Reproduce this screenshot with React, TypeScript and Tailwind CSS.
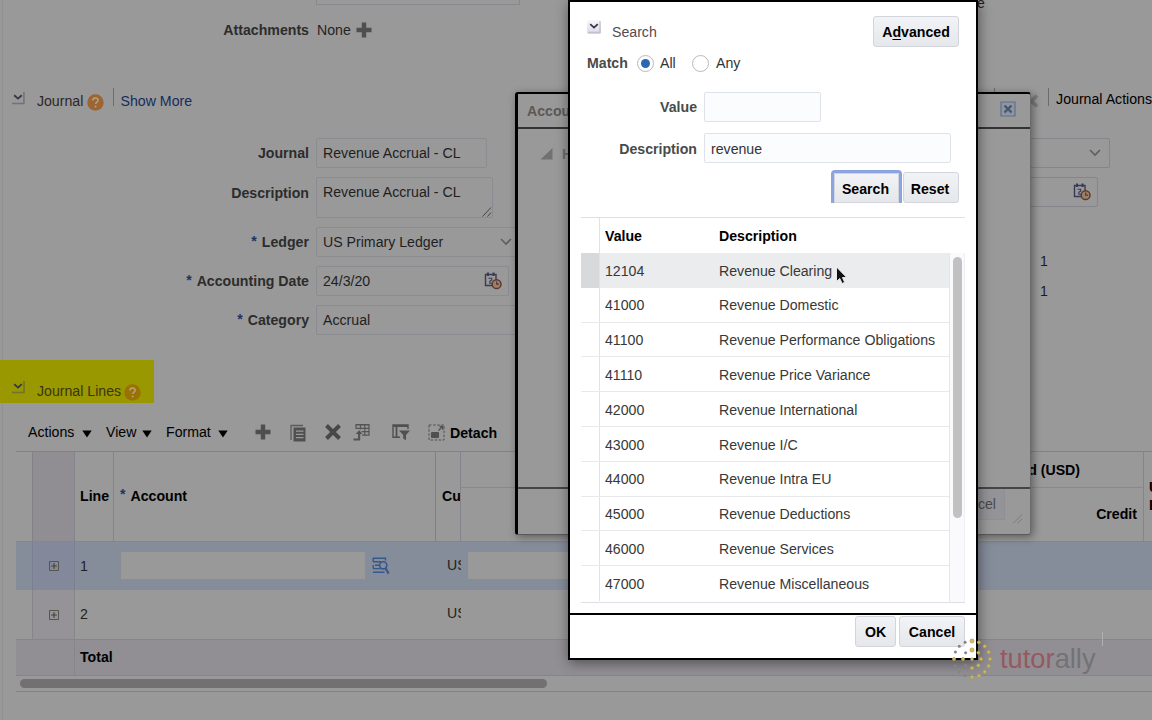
import React from 'react';
import clsx from 'clsx';

interface AccountValue {
  value: string;
  description: string;
}

const accountValues: AccountValue[] = [
  { value: '12104', description: 'Revenue Clearing' },
  { value: '41000', description: 'Revenue Domestic' },
  { value: '41100', description: 'Revenue Performance Obligations' },
  { value: '41110', description: 'Revenue Price Variance' },
  { value: '42000', description: 'Revenue International' },
  { value: '43000', description: 'Revenue I/C' },
  { value: '44000', description: 'Revenue Intra EU' },
  { value: '45000', description: 'Revenue Deductions' },
  { value: '46000', description: 'Revenue Services' },
  { value: '47000', description: 'Revenue Miscellaneous' },
];

const DiscloseIcon = ({ className }: { className?: string }) => (
  <svg width="14" height="14" viewBox="0 0 14 14" fill="none" className={className}>
    <path d="M1 12.5h12V1" stroke="currentColor" strokeWidth="1.6" opacity="0.45" />
    <path d="M3.2 4.2L7 7.6l3.8-3.4" stroke="#35354a" strokeWidth="1.8" />
  </svg>
);

const HelpIcon = ({ className }: { className: string }) => (
  <svg width="17" height="17" viewBox="0 0 17 17" className={className}>
    <circle cx="8.5" cy="8.5" r="8.3" fill="currentColor" />
    <path
      d="M5.9 6.6c0-3.4 5.3-3.2 5.3-.3 0 1.9-2.5 1.9-2.5 3.8"
      fill="none"
      stroke="#bd9f7c"
      strokeWidth="1.5"
    />
    <circle cx="8.6" cy="12.6" r="1" fill="#bd9f7c" />
  </svg>
);

const PlusIcon = ({ className }: { className?: string }) => (
  <svg width="16" height="16" viewBox="0 0 16 16" className={className}>
    <path d="M5.8 0.5h4.4v5.3h5.3v4.4h-5.3v5.3H5.8v-5.3H0.5V5.8h5.3z" fill="#4f4f4f" />
  </svg>
);

const CalendarIcon = () => (
  <svg width="18" height="18" viewBox="0 0 18 18" fill="none">
    <path d="M1.5 2.5h10.5v11H1.5z" stroke="#3a3a56" strokeWidth="1.4" />
    <path d="M4 0.5v3.5M9.5 0.5v3.5" stroke="#3a3a56" strokeWidth="2" />
    <path d="M4.5 6.3h3.2v1.8L5.8 9.2v2h2.4" stroke="#3a3a56" strokeWidth="1.1" />
    <circle cx="12.6" cy="12.2" r="4.4" fill="#9b8068" stroke="#5c3a30" strokeWidth="1.5" />
    <path d="M12.6 9.4v2.8h2.4" stroke="#5c3a30" strokeWidth="1.2" />
  </svg>
);

const ChevronIcon = () => (
  <svg width="12" height="8" viewBox="0 0 12 8" fill="none">
    <path d="M1 1l5 5 5-5" stroke="#5e5e62" strokeWidth="1.6" />
  </svg>
);

const ExpandIcon = () => (
  <svg width="10" height="10" viewBox="0 0 10 10" fill="none">
    <path d="M0.5 0.5h9v9h-9z" stroke="#55554c" />
    <path d="M5 2.2v5.6M2.2 5h5.6" stroke="#44443c" strokeWidth="1.2" />
  </svg>
);

const AccountPickerIcon = () => (
  <svg width="18" height="18" viewBox="0 0 18 18" fill="none" stroke="#37588a">
    <path d="M13.5 3.4V1.2H1M1 15.2h11.5M1.2 1v4M1.2 8v3.6" strokeWidth="1.4" />
    <path d="M1 4.8h8M3 8.2h4M1 11.6h7.5" strokeWidth="1.4" />
    <circle cx="11.2" cy="8.3" r="3.6" strokeWidth="1.6" />
    <path d="M13.4 11l3.2 5.6" strokeWidth="2.2" />
  </svg>
);

const Cell = ({ children, className }: { children?: React.ReactNode; className?: string }) => (
  <div className={clsx('flex shrink-0 items-center', className)}>{children}</div>
);

interface FieldProps {
  label: string;
  required?: boolean;
  className: string;
  labelClass?: string;
  children: React.ReactNode;
}

const Field = ({ label, required, className, labelClass, children }: FieldProps) => (
  <div className="flex gap-[7px]">
    <div className={clsx('flex h-[30px] w-[309px] items-center justify-end font-bold text-[#2c2c2c]', labelClass)}>
      {required && <span className="mr-[5px] -mt-[3px] text-[#1c3462]">*</span>}
      {label}
    </div>
    <div className={clsx('flex rounded-[2px] border border-[#8b8b92] px-1.5 text-[#1f1f1f]', className)}>
      {children}
    </div>
  </div>
);

const Menu = ({ label, className }: { label: string; className: string }) => (
  <div className={clsx('flex items-center justify-between text-black', className)}>
    {label}
    <svg width="10" height="8" viewBox="0 0 10 8" className="mt-[3px]">
      <path d="M0.3 0.5h9.4L5 7.5z" fill="#000" />
    </svg>
  </div>
);

const Toolbar = () => (
  <div className="flex h-[48px] items-center pl-7 pt-[10px]">
    <Menu label="Actions" className="w-[64px]" />
    <Menu label="View" className="ml-[14px] w-[46px]" />
    <Menu label="Format" className="ml-[14px] w-[62px]" />
    <PlusIcon className="ml-[27px]" />
    <svg width="16" height="18" viewBox="0 0 16 18" className="ml-[19px] mt-px">
      <path d="M1 16V1.5h12" fill="none" stroke="#5c5c5c" strokeWidth="1.3" />
      <path d="M3.5 3.5h12v14h-12z" fill="#505050" />
      <path d="M6 7.2h7.5M6 10.4h7.5M6 13.6h7.5" stroke="#999" strokeWidth="1.3" />
    </svg>
    <svg width="16" height="16" viewBox="0 0 16 16" className="ml-[19px]">
      <path d="M1.5 1.5l13 13M14.5 1.5l-13 13" stroke="#484848" strokeWidth="4" />
    </svg>
    <svg width="17" height="18" viewBox="0 0 17 18" fill="none" stroke="#555" className="ml-[12px]">
      <path d="M3 6V1.5h13v10.7H9" strokeWidth="1.2" />
      <path d="M3 2h13M3 5.3h13M8.5 8.7h7.5M7.5 1.5v5M11.8 1.5v10.7" strokeWidth="1.2" />
      <path d="M0.5 16.5h5.6V9.5" strokeWidth="2.2" />
      <path d="M2.8 11L6.1 7.3 9.4 11z" fill="#505050" stroke="none" />
    </svg>
    <svg width="18" height="17" viewBox="0 0 18 17" fill="none" stroke="#505050" className="ml-[22px]">
      <path d="M8 13.3H1V1h15v4" strokeWidth="1.4" />
      <path d="M1 2h15M4.5 1v12" strokeWidth="1.8" />
      <path d="M7 6.5h11l-4 4.4v5.3l-2.8-1.8v-3.5z" fill="#505050" stroke="none" />
    </svg>
    <svg width="17" height="17" viewBox="0 0 17 17" fill="none" stroke="#505050" className="ml-[18px]">
      <path d="M1 1h15v15H1z" strokeDasharray="2.5 1.6" />
      <path d="M3.5 8.5h7v5h-7z" fill="#505050" />
      <path d="M10.5 6.5l4-4M11.5 2.5h3.2v3.2" strokeWidth="1.3" />
    </svg>
    <span className="ml-[5px] mt-[2px] font-bold text-black">Detach</span>
  </div>
);

const LinesTable = () => (
  <div className="ml-4 w-[1136px] overflow-hidden border-t border-[#818188]">
    <div className="flex h-[89px] font-bold text-black">
      <Cell className="w-[17px] border-r border-[#818188]" />
      <Cell className="w-[42px] border-r border-[#84848c] bg-[#918e93]" />
      <Cell className="w-[39px] border-r border-[#84848c] pl-[5px] pb-[2px]">Line</Cell>
      <Cell className="w-[322px] border-r border-[#7f8188] pl-[6px] pb-[2px]">
        <span className="-mt-[3px] mr-[5px] text-[#1c3462]">*</span>Account
      </Cell>
      <Cell className="w-[25px] overflow-hidden border-r border-[#84848c] pl-[6px] pb-[2px]">Cu</Cell>
      <div className="flex w-[683px] shrink-0 flex-col border-r border-[#84848c]">
        <div className="flex h-[36px] items-center justify-end border-b border-[#888890] pr-[63px]">
          Accounted (USD)
        </div>
        <div className="flex flex-1 items-center justify-end pr-[6px] pb-px">Credit</div>
      </div>
      <Cell className="w-[60px] pl-[5px] pb-[2px] leading-[18px]">
        Units
        <br />
        Entered
      </Cell>
    </div>
    <div className="flex h-[49px] items-center border-t border-[#7c8798] bg-[#858c9a] text-[#222]">
      <Cell className="h-full w-[17px] border-r border-[#7a808f]" />
      <Cell className="h-full w-[42px] justify-center border-r border-[#7a808f] bg-[#83889a]">
        <ExpandIcon />
      </Cell>
      <Cell className="w-[45px] pl-[5px]">1</Cell>
      <div className="h-[29px] w-[246px] border border-[#898c95] bg-[#999] -mt-px" />
      <Cell className="w-[69px] pl-[6px]">
        <AccountPickerIcon />
      </Cell>
      <Cell className="w-[26px] overflow-hidden pl-[12px] pb-[2px]">USD</Cell>
      <div className="-mt-px ml-[6px] h-[29px] w-[160px] border border-[#898c95] bg-[#999]" />
    </div>
    <div className="flex h-[49px] items-center text-[#222]">
      <Cell className="h-full w-[17px] border-r border-[#85858c]" />
      <Cell className="h-full w-[42px] justify-center border-r border-[#85858c] bg-[#959398]">
        <ExpandIcon />
      </Cell>
      <Cell className="w-[360px] pl-[5px] pb-[2px]">2</Cell>
      <Cell className="w-[26px] overflow-hidden pl-[12px] pb-[3px]">USD</Cell>
    </div>
    <div className="flex h-[37px] items-center border-y border-[#85858b] bg-[#918f94] font-bold text-black">
      <Cell className="h-full w-[59px] border-r border-[#85858c]" />
      <Cell className="pl-[5px] pb-[2px]">Total</Cell>
    </div>
    <div className="flex h-[16px] items-center border-b border-[#838387] pl-1">
      <div className="h-[9px] w-[527px] rounded-full bg-[#727070]" />
    </div>
  </div>
);

const JournalPage = () => (
  <div className="relative flex flex-col">
    <div className="flex h-[5px]">
      <div className="ml-[316px] w-[204px] border border-t-0 border-[#88888f]" />
      <span className="ml-[457px] -mt-[5px] leading-[16px] text-[#1c1c1c]">e</span>
    </div>
    <div className="flex h-[49px] items-center">
      <span className="w-[309px] pt-px text-right font-bold text-[#2c2c2c]">Attachments</span>
      <span className="ml-[8px] mr-[5px] text-[#242424]">None</span>
      <PlusIcon />
    </div>
    <div className="mt-[32px] flex h-[30px] items-center">
      <DiscloseIcon className="-mt-[7px] ml-[11px] text-[#44445c]" />
      <span className="ml-[12px] w-[50px] text-[#2e2628]">Journal</span>
      <HelpIcon className="mt-[2px] text-[#9b6534]" />
      <div className="-mt-[9px] ml-[9px] h-[18px] w-px bg-[#6c6c6c]" />
      <span className="ml-[7px] w-[72px] text-[#162c5c]">Show More</span>
      <div className="-mt-[9px] ml-[802px] h-[18px] w-px bg-[#6c6c6c]" />
      <svg width="12" height="16" viewBox="0 0 12 16" className="ml-[31px]">
        <path d="M0 2.5l11 11M11 2.5l-11 11" stroke="#7b7b7b" strokeWidth="3.6" />
      </svg>
      <div className="-mt-[9px] ml-[10px] h-[18px] w-px shrink-0 bg-[#6c6c6c]" />
      <span className="-mt-[4px] ml-[7px] shrink-0 text-black">Journal Actions</span>
    </div>
    <div className="mt-[22px] flex h-[222px]">
      <div className="flex w-[570px] flex-col">
        <Field label="Journal" className="h-[30px] w-[171px] items-center">
          Revenue Accrual - CL
        </Field>
        <div className="h-[9px]" />
        <Field label="Description" labelClass="pt-[2px]" className="h-[41px] w-[177px] justify-between pt-[5px] pr-0 leading-[18px]">
          Revenue Accrual - CL
          <svg width="10" height="10" viewBox="0 0 10 10" className="self-end">
            <path d="M0.5 9.5l8.5-9M5.5 9.5l3.5-4" stroke="#444" />
          </svg>
        </Field>
        <div className="h-[9px]" />
        <Field label="Ledger" required className="h-[30px] w-[205px] items-center justify-between pr-[8px] pb-px">
          US Primary Ledger
          <ChevronIcon />
        </Field>
        <div className="h-[9px]" />
        <Field label="Accounting Date" required className="h-[30px] w-[193px] items-center justify-between">
          24/3/20
          <CalendarIcon />
        </Field>
        <div className="h-[9px]" />
        <Field label="Category" required className="h-[30px] w-[205px] items-center">
          Accrual
        </Field>
      </div>
      <div className="flex flex-1 flex-col pl-[400px] text-[#1c1c1c]">
        <div className="flex h-[30px] w-[140px] items-center justify-end rounded-[2px] border border-[#85858b] pr-[8px]">
          <ChevronIcon />
        </div>
        <div className="mt-[9px] flex h-[30px] w-[128px] items-center justify-end rounded-[2px] border border-[#85858b] pr-[6px]">
          <CalendarIcon />
        </div>
        <span className="mt-[39px] pl-[70px] leading-[30px]">1</span>
        <span className="pl-[70px] leading-[31px]">1</span>
      </div>
    </div>
    <div className="flex h-[43px] w-[154px] items-end bg-[#9a9800] pb-[2px]">
      <DiscloseIcon className="mb-[7px] ml-[11px] text-[#44445c]" />
      <span className="ml-[12px] w-[87px] leading-[20px] text-[#3c3410]">Journal Lines</span>
      <HelpIcon className="text-[#9a7204]" />
    </div>
    <Toolbar />
    <LinesTable />
  </div>
);

// Account combination dialog, sits behind the value picker
const AccountDialog = () => (
  <div className="absolute left-[515px] top-[92px] flex h-[443px] w-[516px] flex-col rounded-[3px] border-l-[3px] border-t-[2px] border-r border-b border-t-black border-l-black border-r-[#6b6b6b] border-b-[#5a5a5a] bg-[#999] shadow-[2px_2px_9px_rgba(0,0,0,0.4)]">
    <div className="flex h-[35px] items-center justify-between border-b-2 border-[#333] pl-[9px] pr-[14px]">
      <span className="font-bold text-[#5c5858]">Account</span>
      <svg width="16" height="16" viewBox="0 0 16 16" fill="none" className="-mt-[4px]">
        <path d="M1 1h14v14H1z" fill="#8d95a2" stroke="#5f7089" strokeWidth="1.2" />
        <path d="M4.5 4.5l7 7M11.5 4.5l-7 7" stroke="#46566f" strokeWidth="2.4" />
      </svg>
    </div>
    <div className="flex flex-1 items-start pl-[22px] pt-[16px]">
      <svg width="13" height="12" viewBox="0 0 13 12" className="mt-[3px]">
        <path d="M12.5 0v11.5H0.5z" fill="#717171" />
      </svg>
      <span className="ml-[9px] font-bold text-[#6b6b6b]">Hide</span>
    </div>
    <div className="flex h-[47px] justify-end border-t-2 border-[#444] pr-[7px]">
      <div className="flex h-[31px] w-[70px] items-center justify-end border-r border-b border-[#8e8e94] bg-[#949498] pr-[8px] text-[#4a4a4a]">
        Cancel
      </div>
      <svg width="10" height="10" viewBox="0 0 10 10" className="ml-[8px] mt-[25px]">
        <path d="M0 9.5l9-9M4.5 9.5l4.5-4.5" stroke="#7c7c7c" />
      </svg>
    </div>
  </div>
);

const Button = ({ children, className }: { children: React.ReactNode; className: string }) => (
  <div
    className={clsx(
      'flex items-center justify-center rounded-[3px] border border-[#d3d5dc] bg-linear-to-b from-[#f2f3f6] to-[#e6e7eb] font-bold text-black',
      className,
    )}
  >
    <span>{children}</span>
  </div>
);

const Radio = ({ checked }: { checked?: boolean }) => (
  <div className="flex h-[17px] w-[17px] items-center justify-center rounded-full border border-[#b9b9b9] bg-white">
    {checked && <div className="h-[9px] w-[9px] rounded-full bg-[#2c66b4]" />}
  </div>
);

const SearchDialog = () => (
  <div className="absolute left-[568px] top-0 flex h-[660px] w-[410px] flex-col border-2 border-black bg-white shadow-[1px_3px_12px_rgba(0,0,0,0.45)]">
    <div className="flex h-[45px] items-start pl-[17px] pt-[14px]">
      <div className="mt-[4px] flex h-[14px] w-[14px] items-center justify-center rounded-[2px] bg-linear-to-b from-[#f7f7fa] to-[#d9dae4]">
        <DiscloseIcon className="text-[#a0a0b8]" />
      </div>
      <span className="ml-[11px] leading-[32px] text-[#564a50]">Search</span>
      <Button className="ml-auto mr-[17px] h-[31px] w-[86px]">
        A<u className="underline-offset-2">d</u>vanced
      </Button>
    </div>
    <div className="flex h-[34px] items-center pb-[2px] pl-[17px] text-[#333]">
      <span className="w-[50px] font-bold text-[#4a4a4a]">Match</span>
      <Radio checked />
      <span className="ml-[6px] w-[32px]">All</span>
      <Radio />
      <span className="ml-[7px]">Any</span>
    </div>
    <div className="mt-[11px] flex h-[30px] items-center">
      <span className="w-[127px] text-right font-bold text-[#4a4a4a]">Value</span>
      <div className="ml-[7px] h-[30px] w-[117px] rounded-[2px] border border-[#dfe2e9] bg-[#fbfcfe]" />
    </div>
    <div className="mt-[11px] flex h-[30px] items-center">
      <span className="w-[127px] pt-[2px] text-right font-bold text-[#4a4a4a]">Description</span>
      <div className="ml-[7px] flex h-[30px] w-[247px] items-center rounded-[2px] border border-[#dfe2e9] bg-[#fbfcfe] pt-[2px] pl-[6px] text-[#333]">
        revenue
      </div>
    </div>
    <div className="mt-[7px] flex h-[33px] items-end justify-end pr-[17px]">
      <div className="flex h-[33px] w-[71px] flex-col rounded-t-[4px] border-[3px] border-b-0 border-[#8ba4e0]">
        <Button className="h-[30px] w-full rounded-none border-[#c9d3ee] pt-px pr-[2px]">Search</Button>
      </div>
      <Button className="ml-[1px] h-[31px] w-[56px] pt-[2px] pr-[2px]">Reset</Button>
    </div>
    <div className="mx-[11px] mt-[14px] h-[386px] border-y border-[#dcdfe5]">
      <div className="flex h-[35px] font-bold text-black">
        <Cell className="w-[19px] border-r border-[#dfe2e8]" />
        <Cell className="w-[114px] pl-[5px]">Value</Cell>
        <Cell className="pl-[5px]">Description</Cell>
      </div>
      <div className="flex h-[349px]">
        <div className="w-[369px] border-r border-[#e4e6eb]">
          {accountValues.map((row, i) => (
            <div
              key={row.value}
              className={clsx(
                'flex h-[34.8px] text-[#383838]',
                i === 0 && 'bg-[#ebecee]',
                i > 0 && i < accountValues.length - 1 && 'border-b border-[#e7e9ed]',
              )}
            >
              <Cell className={clsx('w-[19px] border-r border-[#dfe2e8]', i === 0 && 'bg-[#d8d9db]')} />
              <Cell className="w-[114px] pl-[5px] pt-[1.5px]">{row.value}</Cell>
              <Cell className="pl-[5px] pt-[1.5px]">{row.description}</Cell>
            </div>
          ))}
        </div>
        <div className="flex flex-1 justify-center border-r border-[#eeeff2] bg-[#fafafc] pt-[4px]">
          <div className="h-[261px] w-[9px] rounded-full bg-[#c1c1c1]" />
        </div>
      </div>
    </div>
    <div className="mt-[10px] flex flex-1 items-start justify-end border-t-2 border-black pr-[11px] pt-px">
      <Button className="h-[31px] w-[41px]">OK</Button>
      <Button className="ml-[3px] h-[31px] w-[66px]">Cancel</Button>
    </div>
  </div>
);

const rings = [
  { r: 18, count: 16 },
  { r: 9, count: 8 },
];

const Watermark = () => (
  <div className="absolute left-[952px] top-[638px] flex items-center">
    <svg width="40" height="42" viewBox="-20 -21 40 42">
      {rings.map((ring) =>
        Array.from({ length: ring.count }, (_, i) => {
          const angle = (i / ring.count) * Math.PI * 2 - Math.PI / 2;
          const gold = i <= ring.count / 2 || i === (ring.count * 3) / 4;
          return (
            <circle
              key={`${ring.r}-${i}`}
              cx={Math.cos(angle) * ring.r}
              cy={Math.sin(angle) * ring.r}
              r={i === 0 ? 2 : 1.5}
              fill={gold ? '#d1bd68' : '#858387'}
              stroke={gold ? '#b9a044' : 'none'}
              strokeWidth="0.8"
            />
          );
        }),
      )}
      <circle r="1.7" fill="#d1bd68" />
    </svg>
    <span className="ml-[8px] text-[27.3px] leading-[42px] text-[#747274]">
      <span className="text-[#97595e]">tutor</span>ally
    </span>
    <div className="-mt-[41px] ml-[6px] h-[14px] w-px bg-[#b0b0b0]" />
  </div>
);

const App: React.FC = () => {
  return (
    <div className="relative h-[720px] w-[1152px] overflow-hidden bg-[#999] font-['Liberation_Sans',Arial,sans-serif] text-[14.15px] leading-[18px] whitespace-nowrap">
      <div className="absolute left-[2px] top-0 h-full w-px bg-[#919191]" />
      <JournalPage />
      <AccountDialog />
      <SearchDialog />
      <svg width="14" height="20" viewBox="0 0 14 20" className="absolute left-[835px] top-[266px]">
        <path d="M1.5 1v14.5l3.3-3 2.3 5 2.6-1.2-2.3-4.8h4.3z" fill="#111" stroke="#f4f4f4" strokeWidth="0.9" />
      </svg>
      <Watermark />
    </div>
  );
};

export default App;
